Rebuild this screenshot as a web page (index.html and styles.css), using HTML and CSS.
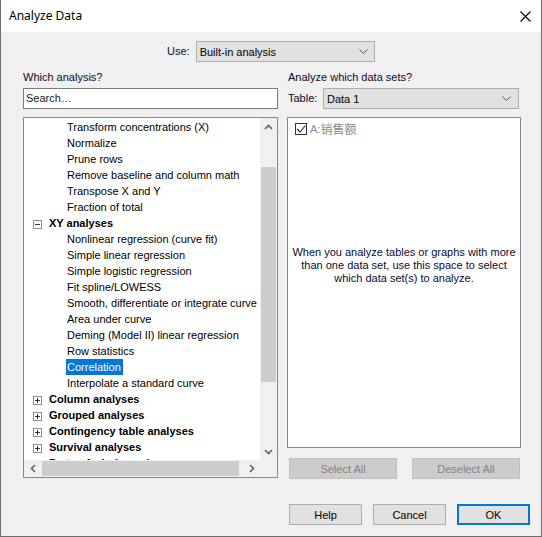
FILE: index.html
```html
<!DOCTYPE html>
<html>
<head>
<meta charset="utf-8">
<link rel="stylesheet" href="styles.css">
</head>
<body>
<div class="window">
  <div class="titlebar">
    <span class="title">Analyze Data</span>
    <svg class="close" width="11" height="11" viewBox="0 0 11 11"><path d="M0.5 0.5 L10.5 10.5 M10.5 0.5 L0.5 10.5" stroke="#000" stroke-width="1.1" fill="none"/></svg>
  </div>
  <div class="body">
    <div class="use-row">
      <span class="lbl">Use:</span>
      <div class="combo use-combo">
        <span>Built-in analysis</span>
        <svg class="chev" width="9" height="5" viewBox="0 0 9 5"><path d="M0.5 0.5 L4.5 4.5 L8.5 0.5" stroke="#555" stroke-width="1" fill="none"/></svg>
      </div>
    </div>
    <div class="columns">
      <div class="left">
        <div class="lbl head">Which analysis?</div>
        <div class="search">Search…</div>
        <div class="tree">
          <div class="tree-main">
            <div class="tree-view">
              <div class="row item">Transform concentrations (X)</div>
              <div class="row item">Normalize</div>
              <div class="row item">Prune rows</div>
              <div class="row item">Remove baseline and column math</div>
              <div class="row item">Transpose X and Y</div>
              <div class="row item">Fraction of total</div>
              <div class="row group"><span class="exp minus"></span>XY analyses</div>
              <div class="row item">Nonlinear regression (curve fit)</div>
              <div class="row item">Simple linear regression</div>
              <div class="row item">Simple logistic regression</div>
              <div class="row item">Fit spline/LOWESS</div>
              <div class="row item">Smooth, differentiate or integrate curve</div>
              <div class="row item">Area under curve</div>
              <div class="row item">Deming (Model II) linear regression</div>
              <div class="row item">Row statistics</div>
              <div class="row item"><span class="sel">Correlation</span></div>
              <div class="row item">Interpolate a standard curve</div>
              <div class="row group"><span class="exp plus"></span>Column analyses</div>
              <div class="row group"><span class="exp plus"></span>Grouped analyses</div>
              <div class="row group"><span class="exp plus"></span>Contingency table analyses</div>
              <div class="row group"><span class="exp plus"></span>Survival analyses</div>
              <div class="row group"><span class="exp plus"></span>Parts of whole analyses</div>
            </div>
            <div class="vscroll">
              <div class="sbtn"><svg width="9" height="6" viewBox="0 0 9 6"><path d="M1 5 L4.5 1.5 L8 5" stroke="#606060" stroke-width="1.6" fill="none"/></svg></div>
              <div class="vgap-top"></div>
              <div class="vthumb"></div>
              <div class="vgap-bot"></div>
              <div class="sbtn"><svg width="9" height="6" viewBox="0 0 9 6"><path d="M1 1 L4.5 4.5 L8 1" stroke="#606060" stroke-width="1.6" fill="none"/></svg></div>
            </div>
          </div>
          <div class="hrow">
            <div class="hscroll">
              <div class="sbtn h"><svg width="6" height="9" viewBox="0 0 6 9"><path d="M5 1 L1.5 4.5 L5 8" stroke="#606060" stroke-width="1.6" fill="none"/></svg></div>
              <div class="hthumb"></div>
              <div class="hgap"></div>
              <div class="sbtn h"><svg width="6" height="9" viewBox="0 0 6 9"><path d="M1 1 L4.5 4.5 L1 8" stroke="#606060" stroke-width="1.6" fill="none"/></svg></div>
            </div>
            <div class="corner"></div>
          </div>
        </div>
      </div>
      <div class="right">
        <div class="lbl head right-head">Analyze which data sets?</div>
        <div class="table-row">
          <span class="lbl">Table:</span>
          <div class="combo table-combo">
            <span>Data 1</span>
            <svg class="chev" width="9" height="5" viewBox="0 0 9 5"><path d="M0.5 0.5 L4.5 4.5 L8.5 0.5" stroke="#555" stroke-width="1" fill="none"/></svg>
          </div>
        </div>
        <div class="datasets">
          <div class="ds-row">
            <span class="check"><svg width="10" height="10" viewBox="0 0 10 10"><path d="M1 5 L4 8 L9.5 1.5" stroke="#222" stroke-width="1.1" fill="none"/></svg></span>
            <span class="ds-id">A:</span><span class="ds-name">销售额</span>
          </div>
          <p class="info">When you analyze tables or graphs with more than one data set, use this space to select which data set(s) to analyze.</p>
        </div>
        <div class="sel-buttons">
          <div class="btn disabled">Select All</div>
          <div class="btn disabled">Deselect All</div>
        </div>
      </div>
    </div>
    <div class="footer">
      <div class="btn">Help</div>
      <div class="btn">Cancel</div>
      <div class="btn ok">OK</div>
    </div>
  </div>
</div>
</body>
</html>
```

FILE: styles.css
```css
html, body {
  margin: 0;
  padding: 0;
  background: #f0f0f0;
}

.window {
  width: 542px;
  height: 537px;
  box-sizing: border-box;
  border-left: 1px solid #6e6e6e;
  border-right: 1px solid #6e6e6e;
  border-bottom: 1px solid #6e6e6e;
  background: #f0f0f0;
  font-family: "Liberation Sans", Arial, sans-serif;
  font-size: 11px;
  color: #000;
  overflow: hidden;
}

.titlebar {
  height: 32px;
  background: #fff;
  display: flex;
  align-items: center;
  justify-content: space-between;
  padding-left: 8px;
  padding-right: 10px;
}

.title {
  font-family: "Noto Sans", sans-serif;
  font-size: 12px;
  line-height: 32px;
  color: #000;
}

.close {
  display: block;
  margin-top: 1px;
}

.body {
  padding: 0 11px 0 22px;
}

.lbl {
  line-height: 13px;
  color: #0a0a28;
}

.use-row {
  display: flex;
  align-items: center;
  margin-top: 9px;
  padding-left: 144px;
  gap: 6px;
}

.combo {
  box-sizing: border-box;
  height: 21px;
  background: #e1e1e1;
  border: 1px solid #adadad;
  display: flex;
  align-items: center;
  justify-content: space-between;
  padding: 0 6px 0 3px;
}

.use-combo {
  width: 179px;
}

.table-combo {
  width: 196px;
  padding-right: 7px;
  margin-left: auto;
  margin-right: 2px;
}

.chev {
  display: block;
}

.columns {
  display: flex;
  gap: 9px;
  margin-top: 9px;
}

.left {
  width: 255px;
}

.right {
  width: 234px;
}

.head {
  height: 13px;
}

.right-head {
  padding-left: 1px;
}

.search {
  box-sizing: border-box;
  height: 21px;
  margin-top: 4px;
  border: 1px solid #7a7a7a;
  background: #fff;
  padding-left: 2px;
  line-height: 19px;
  color: #1a1a1a;
}

.tree {
  box-sizing: border-box;
  height: 361px;
  margin-top: 8px;
  border: 1px solid #828790;
  background: #fff;
  display: flex;
  flex-direction: column;
}

.tree-main {
  display: flex;
  height: 342px;
}

.tree-view {
  width: 236px;
  height: 342px;
  overflow: hidden;
  padding-top: 1px;
  box-sizing: border-box;
  white-space: nowrap;
}

.row {
  height: 16px;
  line-height: 16px;
  display: flex;
  align-items: center;
}

.item {
  padding-left: 43px;
}

.group {
  padding-left: 9px;
  font-weight: bold;
}

.sel {
  background: #0078d7;
  color: #fff;
  margin-left: -1px;
  padding: 0 2px 0 1px;
  line-height: 16px;
}

.exp {
  box-sizing: border-box;
  width: 9px;
  height: 9px;
  border: 1px solid #919191;
  margin-right: 7px;
  margin-top: 3px;
  position: relative;
  background: #fff;
}

.exp::before {
  content: "";
  position: absolute;
  left: 1px;
  top: 3px;
  width: 5px;
  height: 1px;
  background: #333;
}

.plus::after {
  content: "";
  position: absolute;
  left: 3px;
  top: 1px;
  width: 1px;
  height: 5px;
  background: #333;
}

.vscroll {
  width: 17px;
  background: #f0f0f0;
  display: flex;
  flex-direction: column;
}

.sbtn {
  height: 17px;
  width: 17px;
  display: flex;
  align-items: center;
  justify-content: center;
  flex: none;
}

.vgap-top {
  height: 32px;
}

.vthumb {
  height: 215px;
  margin: 0 1px;
  background: #cdcdcd;
}

.vgap-bot {
  flex: 1;
}

.hrow {
  display: flex;
  height: 17px;
}

.hscroll {
  width: 236px;
  background: #f0f0f0;
  display: flex;
}

.hthumb {
  width: 197px;
  margin: 1px 0 1px 1px;
  background: #cdcdcd;
}

.hgap {
  flex: 1;
}

.corner {
  width: 17px;
  background: #f0f0f0;
}

.table-row {
  display: flex;
  align-items: center;
  margin-top: 4px;
  padding-left: 1px;
  height: 21px;
}

.datasets {
  box-sizing: border-box;
  height: 331px;
  margin-top: 8px;
  border: 1px solid #828790;
  background: #fff;
  display: flex;
  flex-direction: column;
}

.ds-row {
  display: flex;
  align-items: center;
  padding: 3px 0 0 7px;
  height: 15px;
}

.check {
  box-sizing: border-box;
  width: 12px;
  height: 12px;
  border: 1px solid #333;
  display: flex;
  align-items: center;
  justify-content: center;
  margin-right: 3px;
  background: #fff;
}

.check svg {
  display: block;
}

.ds-id {
  color: #8289b4;
  font-size: 11px;
}

.ds-name {
  color: #8a8a8a;
  font-family: "Noto Sans CJK SC", sans-serif;
  font-size: 12px;
  line-height: 15px;
}

.info {
  margin: 110px 0 0 0;
  text-align: center;
  line-height: 13px;
  color: #0a0a32;
  padding: 0 4px;
}

.sel-buttons {
  display: flex;
  justify-content: space-between;
  margin-top: 10px;
  padding: 0 1px 0 2px;
}

.btn {
  box-sizing: border-box;
  height: 21px;
  border: 1px solid #adadad;
  background: #e1e1e1;
  display: flex;
  align-items: center;
  justify-content: center;
  color: #000;
}

.sel-buttons .btn {
  width: 108px;
}

.btn.disabled {
  background: #cccccc;
  border-color: #bfbfbf;
  color: #838383;
}

.footer {
  display: flex;
  justify-content: flex-end;
  gap: 11px;
  margin-top: 25px;
}

.footer .btn {
  width: 73px;
}

.btn.ok {
  border: 2px solid #0078d7;
}
```
